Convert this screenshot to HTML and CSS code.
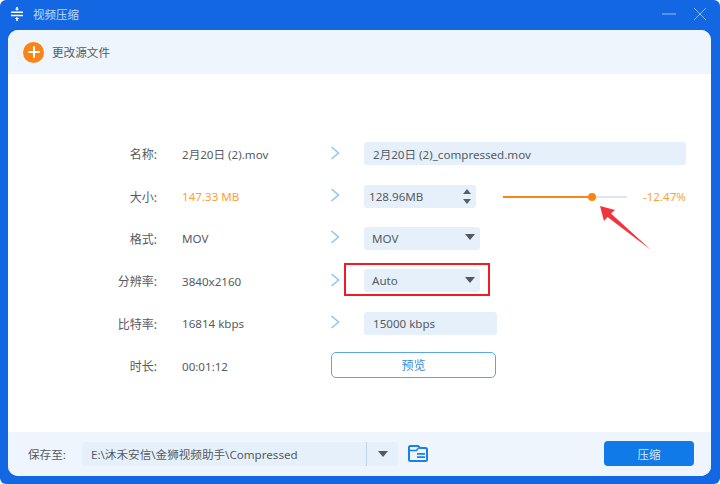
FILE: index.html
```html
<!DOCTYPE html>
<html lang="zh">
<head>
<meta charset="utf-8">
<title>视频压缩</title>
<link rel="stylesheet" href="styles.css">
</head>
<body>
<div class="window">
  <header class="titlebar">
    <svg class="app-icon" width="16" height="16" viewBox="0 0 16 16"><path d="M2 5.500h12v1.500H2zM2 8.800h12v1.500H2z" fill="#fff"/><path d="M8 4.800 5.800 2.800h1.400V1h1.600v1.800h1.400zM8 11l-2.200 2h1.400v2h1.600v-2h1.400z" fill="#fff"/></svg>
    <span class="app-title">视频压缩</span>
    <div class="win-controls">
      <svg width="14" height="14" viewBox="0 0 14 14"><path d="M0 7h14" stroke="#7fb0f2" stroke-width="1.200"/></svg>
      <svg width="14" height="14" viewBox="0 0 14 14"><path d="M1 1l12 12M13 1 1 13" stroke="#8fbaf4" stroke-width="1"/></svg>
    </div>
  </header>
  <div class="panel">
    <div class="toolbar">
      <span class="add-btn"><svg width="12" height="12" viewBox="0 0 12 12"><path d="M6 1v10M1 6h10" stroke="#fff" stroke-width="2" stroke-linecap="round"/></svg></span>
      <span class="toolbar-text">更改源文件</span>
    </div>
    <main class="form">
      <div class="row">
        <span class="label">名称:</span><span class="value">2月20日 (2).mov</span>
        <svg class="chev" width="10" height="14" viewBox="0 0 10 14"><path d="M1.500 1l7 6-7 6" fill="none" stroke="#8cc4f4" stroke-width="1.500"/></svg>
        <div class="field name-field">2月20日 (2)_compressed.mov</div>
      </div>
      <div class="row">
        <span class="label">大小:</span><span class="value orange">147.33 MB</span>
        <svg class="chev" width="10" height="14" viewBox="0 0 10 14"><path d="M1.500 1l7 6-7 6" fill="none" stroke="#8cc4f4" stroke-width="1.500"/></svg>
        <div class="size-group">
          <div class="field size-field"><span>128.96MB</span>
            <span class="stepper"><i class="up"></i><i class="down"></i></span>
          </div>
          <div class="slider"><div class="slider-fill"></div><div class="slider-thumb"></div></div>
          <span class="pct">-12.47%</span>
        </div>
      </div>
      <div class="row">
        <span class="label">格式:</span><span class="value">MOV</span>
        <svg class="chev" width="10" height="14" viewBox="0 0 10 14"><path d="M1.500 1l7 6-7 6" fill="none" stroke="#8cc4f4" stroke-width="1.500"/></svg>
        <div class="field select-field"><span>MOV</span><i class="caret"></i></div>
      </div>
      <div class="row">
        <span class="label">分辨率:</span><span class="value">3840x2160</span>
        <svg class="chev" width="10" height="14" viewBox="0 0 10 14"><path d="M1.500 1l7 6-7 6" fill="none" stroke="#8cc4f4" stroke-width="1.500"/></svg>
        <div class="field select-field"><span>Auto</span><i class="caret"></i></div>
      </div>
      <div class="row">
        <span class="label">比特率:</span><span class="value">16814 kbps</span>
        <svg class="chev" width="10" height="14" viewBox="0 0 10 14"><path d="M1.500 1l7 6-7 6" fill="none" stroke="#8cc4f4" stroke-width="1.500"/></svg>
        <div class="field bitrate-field">15000 kbps</div>
      </div>
      <div class="row">
        <span class="label">时长:</span><span class="value">00:01:12</span>
        <button class="preview">预览</button>
      </div>
    </main>
    <footer class="footer">
      <span class="save-label">保存至:</span>
      <div class="path">
        <span class="path-text">E:\沐禾安信\金狮视频助手\Compressed</span>
        <span class="path-drop"><i class="caret"></i></span>
      </div>
      <svg class="folder" width="22" height="20" viewBox="0 0 22 20"><path d="M2 7V3.500A1.500 1.500 0 0 1 3.500 2h7.500l2 2h5.500A1.500 1.500 0 0 1 20 5.500v10a1.500 1.500 0 0 1-1.500 1.500h-15A1.500 1.500 0 0 1 2 15.500z" fill="none" stroke="#1a80e8" stroke-width="2"/><path d="M2 6.500h7.500L11.500 4" fill="none" stroke="#1a80e8" stroke-width="1.500"/><path d="M10 9h8v1.800h-8zM10 12.200h8V14h-8z" fill="#1a80e8"/></svg>
      <button class="compress">压缩</button>
    </footer>
  </div>
  <div class="red-box"></div>
  <svg class="red-arrow" width="60" height="60" viewBox="0 0 60 60"><path d="M2 2 17 6 13 9.500 53 46 9.500 13 6 17z" fill="#f4333c"/></svg>
</div>
</body>
</html>
```

FILE: styles.css
```css
* { box-sizing: border-box; }
html, body { margin: 0; padding: 0; background: #fff; }
body {
  width: 720px;
  height: 484px;
  overflow: hidden;
  font-family: "Noto Sans", "Noto Sans CJK SC", sans-serif;
  font-size: 11.6px;
  color: #555b63;
}
.window {
  position: relative;
  width: 720px;
  height: 484px;
  background: #1467e2;
  border-radius: 6px;
  padding: 0 9px 8px 8px;
  display: flex;
  flex-direction: column;
}
.titlebar {
  height: 30px;
  flex: none;
  display: flex;
  align-items: center;
  padding-left: 1px;
  padding-bottom: 2px;
}
.app-title { margin-left: 8px; color: #c4dafa; font-size: 11.5px; }
.win-controls {
  margin-left: auto;
  display: flex;
  gap: 17px;
  margin-right: 4px;
}
.panel {
  flex: 1;
  min-height: 0;
  background: #fff;
  border-radius: 10px;
  display: flex;
  flex-direction: column;
  overflow: hidden;
}
.toolbar {
  height: 44px;
  flex: none;
  background: #eef5fd;
  display: flex;
  align-items: center;
  padding-left: 15px;
}
.add-btn {
  width: 21px;
  height: 21px;
  border-radius: 50%;
  background: #fb8416;
  display: flex;
  align-items: center;
  justify-content: center;
}
.toolbar-text { margin-left: 8px; }
.form {
  flex: 1;
  display: grid;
  grid-auto-rows: 42.4px;
  align-content: start;
  padding-top: 59px;
}
.row {
  display: grid;
  grid-template-columns: 149px 173px 34px 1fr;
  align-items: center;
}
.label { text-align: right; font-size: 12px; }
.value { padding-left: 25px; }
.orange { color: #fba135; }
.chev { margin-top: -3px; }
.field {
  height: 23px;
  margin-top: -1px;
  background: #e6f0fa;
  border-radius: 3px;
  display: flex;
  align-items: center;
}
.name-field { width: 322px; padding-left: 9px; }
.size-group { display: flex; align-items: center; }
.size-field {
  width: 112px;
  padding: 0 5px 0 5px;
  justify-content: space-between;
  flex: none;
}
.stepper { display: flex; flex-direction: column; gap: 5px; }
.up, .down { display: block; width: 0; height: 0; border-left: 4.500px solid transparent; border-right: 4.500px solid transparent; }
.up { border-bottom: 5px solid #5a5f66; }
.down { border-top: 5px solid #5a5f66; }
.slider {
  position: relative;
  width: 124px;
  height: 2px;
  margin-left: 27px;
  background: #dfe4ee;
  flex: none;
}
.slider-fill { width: 90px; height: 2px; background: #fb8416; }
.slider-thumb {
  position: absolute;
  left: 85px;
  top: -3px;
  width: 8px;
  height: 8px;
  border-radius: 50%;
  background: #fb8416;
}
.pct { margin-left: 16px; color: #fba135; }
.select-field {
  width: 116px;
  padding: 0 5px 0 8px;
  justify-content: space-between;
}
.caret {
  display: block;
  width: 0;
  height: 0;
  border-left: 5px solid transparent;
  border-right: 5px solid transparent;
  border-top: 6px solid #55585e;
}
.select-field .caret { margin-top: -2px; }
.bitrate-field { width: 133px; padding-left: 9px; }
.preview {
  grid-column: 3 / 5;
  width: 165px;
  height: 26px;
  margin: -2px 0 0 1px;
  background: #fff;
  border: 1px solid #5aa5ec;
  border-radius: 5px;
  color: #3f88d8;
  font: inherit;
  font-size: 12px;
  padding: 0;
}
.footer {
  height: 44px;
  flex: none;
  background: #eef5fd;
  display: flex;
  align-items: center;
  padding-left: 20px;
}
.save-label { width: 54px; flex: none; }
.path {
  width: 316px;
  height: 24px;
  margin-top: -1px;
  background: #e6f0fa;
  border-radius: 3px;
  display: flex;
  align-items: center;
}
.path-text { flex: 1; padding-left: 9px; }
.path-drop {
  width: 32px;
  height: 24px;
  border-left: 1px solid #b9d7f5;
  display: flex;
  align-items: center;
  justify-content: center;
}
.folder { margin-left: 9px; flex: none; }
.compress {
  margin: -1px 17px 0 auto;
  width: 90px;
  height: 25px;
  background: #0f7ae8;
  color: #d8e9fc;
  border: none;
  border-radius: 4px;
  font: inherit;
  padding: 0;
}
.red-box {
  position: absolute;
  left: 344px;
  top: 263px;
  width: 146px;
  height: 33px;
  border: 2px solid #ee1c25;
}
.red-arrow {
  position: absolute;
  left: 598px;
  top: 204px;
}
```
